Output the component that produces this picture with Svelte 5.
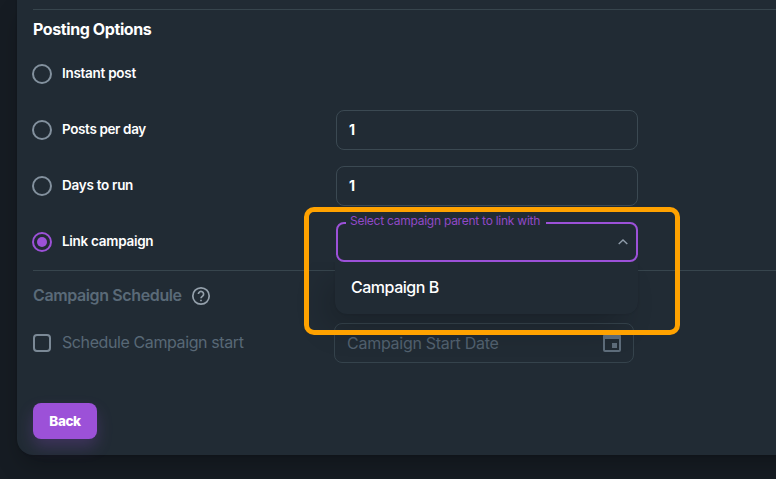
<script>
  const options = [
    { id: 'instant', label: 'Instant post' },
    { id: 'perday', label: 'Posts per day', value: '1' },
    { id: 'days', label: 'Days to run', value: '1' },
    { id: 'link', label: 'Link campaign', select: true },
  ];
  let selected = $state('link');
</script>

<main>
  <section class="card">
    <hr />
    <h2><span>Posting Options</span></h2>

    {#each options as option}
      <div class="row">
        <button class="radio" class:on={selected === option.id} aria-label={option.label} onclick={() => (selected = option.id)}></button>
        <span class="label {option.id}">{option.label}</span>
        {#if option.value}
          <div class="field"><span>{option.value}</span></div>
        {:else if option.select}
          <div class="field select">
            <span class="legend">Select campaign parent to link with</span>
            <svg class="chevron" width="12" height="8" viewBox="0 0 12 8"><path d="M1.7 6 6 2 10.3 6" /></svg>
            <div class="menu">Campaign B</div>
            <div class="highlight"></div>
          </div>
        {/if}
      </div>
    {/each}

    <hr />
    <h3>
      <span>Campaign Schedule</span>
      <svg class="help" width="20" height="20" viewBox="0 0 20 20">
        <circle cx="10" cy="10" r="8.2" />
        <path d="M7.4 8.1a2.6 2.6 0 1 1 4.2 2.05C10.6 10.9 10 11.2 10 12.3" />
        <path d="M10 13.7v1.6" />
      </svg>
    </h3>
    <div class="row schedule">
      <span class="check"></span>
      <span class="label">Schedule Campaign start</span>
      <div class="field date">
        <span>Campaign Start Date</span>
        <svg width="18" height="20" viewBox="0 0 18 20">
          <path fill-rule="evenodd" d="M3 0h2v2h8V0h2v2h1a2 2 0 0 1 2 2v14a2 2 0 0 1-2 2H2a2 2 0 0 1-2-2V4a2 2 0 0 1 2-2h1zM2 7v11h14V7zM9 11h5v5H9z" />
        </svg>
      </div>
    </div>
    <button class="back">Back</button>
  </section>
</main>

<style>
  :global(body) { background: #161c23; }
  main {
    width: 776px;
    height: 479px;
    overflow: hidden;
    background: #161c23;
    font-family: Inter, "Liberation Sans", sans-serif;
    color: #fff;
  }
  .card {
    box-sizing: border-box;
    width: 800px;
    height: 455px;
    margin-left: 17px;
    padding: 9px 0 0 16px;
    background: #212b34;
    border-radius: 0 0 0 16px;
    box-shadow: 0 0 2px rgba(0, 0, 0, 0.2), 0 12px 24px -4px rgba(0, 0, 0, 0.28);
  }
  hr { height: 1px; margin: 0; border: 0; background: #37454d; }
  h2 {
    display: flex;
    align-items: center;
    box-sizing: border-box;
    height: 36px;
    margin: 0;
    padding-top: 2px;
    font-size: 16px;
    line-height: 32px;
    font-weight: 700;
    letter-spacing: -0.4px;
  }
  .row { display: flex; align-items: center; height: 56px; }
  .radio {
    position: relative;
    box-sizing: border-box;
    flex: none;
    width: 20px;
    height: 20px;
    margin: 0 10px 0 -1px;
    padding: 0;
    border: 2px solid #83919e;
    border-radius: 50%;
    background: none;
  }
  .radio.on { border-color: #9c51d8; }
  .radio.on::after {
    content: '';
    position: absolute;
    inset: 3px;
    border-radius: 50%;
    background: #9c51d8;
  }
  .label {
    flex: none;
    width: 274px;
    padding-bottom: 2px;
    font-size: 13.5px;
    line-height: 20px;
    font-weight: 600;
    letter-spacing: -0.28px;
    white-space: nowrap;
  }
  .perday { letter-spacing: -0.38px; }
  .field {
    position: relative;
    display: flex;
    align-items: center;
    box-sizing: border-box;
    width: 302px;
    height: 40px;
    padding: 0 12px 1px;
    border: 1px solid #3b4952;
    border-radius: 8px;
    font-size: 14px;
    font-weight: 700;
  }
  .select { border: 2px solid #9c51d8; }
  .legend {
    position: absolute;
    left: 8px;
    top: -11px;
    box-sizing: border-box;
    width: 200px;
    height: 16px;
    padding-left: 4px;
    background: #212b34;
    color: #9149c7;
    font-size: 12px;
    line-height: 16px;
    font-weight: 400;
    letter-spacing: -0.25px;
    white-space: nowrap;
  }
  .chevron {
    position: absolute;
    right: 7px;
    top: 14px;
    fill: none;
    stroke: #919eab;
    stroke-width: 1.4;
  }
  .menu {
    position: absolute;
    z-index: 1;
    left: -3px;
    top: 38px;
    box-sizing: border-box;
    width: 303px;
    height: 52px;
    padding: 0 16px;
    border-radius: 0 0 12px 12px;
    background: #212b34;
    box-shadow: 0 0 2px rgba(0, 0, 0, 0.12), -12px 16px 32px -4px rgba(0, 0, 0, 0.2);
    clip-path: inset(0 -60px -80px -80px);
    font-size: 16px;
    line-height: 51px;
    font-weight: 500;
    letter-spacing: -0.48px;
  }
  .highlight {
    position: absolute;
    z-index: 2;
    left: -34px;
    top: -17px;
    box-sizing: border-box;
    width: 376px;
    height: 128px;
    border: 5px solid #ffa200;
    border-radius: 10px;
    pointer-events: none;
  }
  h3 {
    display: flex;
    align-items: center;
    gap: 9px;
    box-sizing: border-box;
    height: 44px;
    margin: 0;
    padding-top: 4px;
    color: #5a6a78;
    font-size: 16px;
    line-height: 24px;
    font-weight: 600;
    letter-spacing: -0.38px;
  }
  h3 span { width: 149px; padding-bottom: 1px; white-space: nowrap; }
  .help {
    margin-top: 2px;
    fill: none;
    stroke: #94a0ab;
    stroke-width: 1.7;
  }
  .check {
    box-sizing: border-box;
    flex: none;
    width: 18px;
    height: 18px;
    margin-right: 11px;
    border: 2px solid #7b8996;
    border-radius: 4px;
  }
  .schedule .label {
    width: 272px;
    color: #586876;
    font-size: 16px;
    font-weight: 400;
    letter-spacing: -0.4px;
  }
  .date {
    width: 300px;
    justify-content: space-between;
    padding: 0 12px;
    border-color: #35434c;
    color: #52616f;
    font-size: 16px;
    font-weight: 400;
    letter-spacing: -0.27px;
  }
  .date span { padding-bottom: 1px; }
  .date svg { margin-top: -2px; fill: #5e6d7b; }
  .back {
    display: block;
    width: 64px;
    height: 36px;
    margin: 32px 0 0;
    padding: 0;
    border: 0;
    border-radius: 8px;
    background: #9c51d8;
    box-shadow: 0 8px 16px rgba(156, 81, 216, 0.24);
    color: #fff;
    font: 800 13.5px/34px Inter, sans-serif;
    letter-spacing: -0.4px;
  }
</style>
